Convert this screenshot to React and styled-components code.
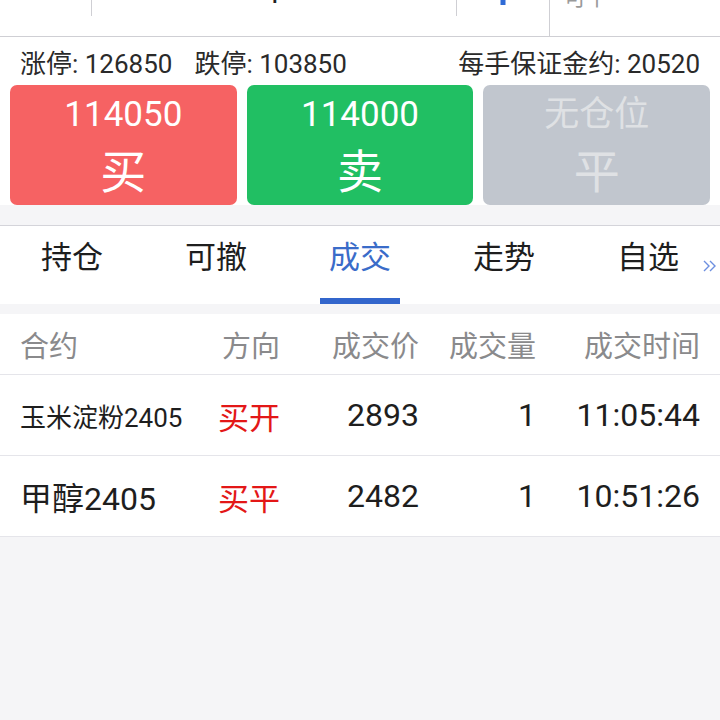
import React from "react";
import styled, { createGlobalStyle } from "styled-components";

const GlobalStyle = createGlobalStyle`
  body {
    margin: 0;
    background: #f5f5f7;
    font-family: Roboto, "Noto Sans CJK SC", sans-serif;
  }
`;

const buttons = [
  { price: "114050", label: "买", tone: "buy" },
  { price: "114000", label: "卖", tone: "sell" },
  { price: "无仓位", label: "平", tone: "off" },
];

const tabs = ["持仓", "可撤", "成交", "走势", "自选"];

const trades = [
  { name: "玉米淀粉2405", size: 26, side: "买开", price: "2893", qty: "1", time: "11:05:44" },
  { name: "甲醇2405", size: 32, side: "买平", price: "2482", qty: "1", time: "10:51:26" },
];

const App = () => {
  return (
    <>
      <GlobalStyle />
      <Page>
        <Top>
          <StepperClip>
            <Stepper>
              <StepCell $w="92px">
                <svg width="28" height="28" viewBox="0 0 28 28">
                  <path d="M3 14h22" stroke="#2f6bd6" strokeWidth="4" />
                </svg>
              </StepCell>
              <StepInput>1</StepInput>
              <StepCell $w="92px" $last>
                <svg width="30" height="30" viewBox="0 0 30 30">
                  <path d="M2 15h26M15 2v28" stroke="#2f6bd6" strokeWidth="5" />
                </svg>
              </StepCell>
            </Stepper>
            <Avail>
              <span>可开</span>
              <span>可平</span>
            </Avail>
          </StepperClip>

          <InfoRow>
            <InfoGroup>
              <span>涨停: 126850</span>
              <span>跌停: 103850</span>
            </InfoGroup>
            <span>每手保证金约: 20520</span>
          </InfoRow>

          <ButtonRow>
            {buttons.map((b) => (
              <TradeButton key={b.label} $tone={b.tone}>
                <Price>{b.price}</Price>
                <Label>{b.label}</Label>
              </TradeButton>
            ))}
          </ButtonRow>
        </Top>

        <TabBar>
          {tabs.map((t) => (
            <Tab key={t} $active={t === "成交"}>
              <span>{t}</span>
              <Underline $active={t === "成交"} />
            </Tab>
          ))}
          <More>
            <svg width="14" height="12" viewBox="0 0 14 12">
              <path d="M1 1l5 5-5 5M7 1l5 5-5 5" fill="none" stroke="#6d8fe0" strokeWidth="1.4" />
            </svg>
          </More>
        </TabBar>

        <Table>
          <HeadRow>
            <HeadCell>合约</HeadCell>
            <HeadCell $right>方向</HeadCell>
            <HeadCell $right>成交价</HeadCell>
            <HeadCell $right>成交量</HeadCell>
            <HeadCell $right>成交时间</HeadCell>
          </HeadRow>
          {trades.map((r) => (
            <BodyRow key={r.name}>
              <Name $size={r.size}>{r.name}</Name>
              <Side>{r.side}</Side>
              <Num>{r.price}</Num>
              <Num>{r.qty}</Num>
              <Num>{r.time}</Num>
            </BodyRow>
          ))}
        </Table>
      </Page>
    </>
  );
};

const Page = styled.div`
  width: 720px;
  min-height: 720px;
  background: #f5f5f7;
  overflow: hidden;
`;

const Top = styled.section`
  background: #fff;
`;

const StepperClip = styled.div`
  height: 36px;
  overflow: hidden;
  display: flex;
  align-items: flex-end;
  border-bottom: 1px solid #cfcfd4;
`;

const Stepper = styled.div`
  width: 549px;
  height: 72px;
  flex-shrink: 0;
  display: flex;
  align-items: flex-start;
`;

const StepCell = styled.div`
  width: ${(p) => p.$w};
  height: 52px;
  display: flex;
  align-items: center;
  justify-content: center;
  border-right: ${(p) => (p.$last ? "none" : "1px solid #cfcfd4")};
  box-sizing: border-box;
`;

const StepInput = styled.div`
  flex: 1;
  height: 52px;
  line-height: 58px;
  text-align: center;
  font-size: 30px;
  color: #222;
  border-right: 1px solid #cfcfd4;
`;

const Avail = styled.div`
  flex: 1;
  height: 72px;
  box-sizing: border-box;
  border-left: 1px solid #cfcfd4;
  padding: 0 0 0 14px;
  display: flex;
  flex-direction: column;
  justify-content: flex-end;
  font-size: 22px;
  line-height: 24px;
  color: #9a9a9a;

  span:last-child {
    margin-bottom: 26px;
  }
`;

const InfoRow = styled.div`
  height: 48px;
  padding: 0 20px;
  display: flex;
  align-items: center;
  justify-content: space-between;
  font-size: 26px;
  color: #2a2a2a;
`;

const InfoGroup = styled.div`
  display: flex;
  gap: 22px;
`;

const ButtonRow = styled.div`
  display: flex;
  gap: 10px;
  padding: 0 10px;
`;

const toneColors = {
  buy: { bg: "#f66263", fg: "#fff" },
  sell: { bg: "#21bf63", fg: "#fff" },
  off: { bg: "#c1c6ce", fg: "#dfe1e4" },
};

const TradeButton = styled.div`
  flex: 1;
  height: 120px;
  border-radius: 7px;
  background: ${(p) => toneColors[p.$tone].bg};
  color: ${(p) => toneColors[p.$tone].fg};
  display: flex;
  flex-direction: column;
  align-items: center;
  padding-top: 8px;
  box-sizing: border-box;
`;

const Price = styled.div`
  font-size: 35px;
  line-height: 44px;
`;

const Label = styled.div`
  margin-top: 3px;
  font-size: 46px;
  line-height: 64px;
`;

const TabBar = styled.nav`
  position: relative;
  margin-top: 20px;
  height: 78px;
  display: flex;
  background: #fff;
  border-top: 1px solid #d4d4da;
`;

const Tab = styled.div`
  flex: 1;
  display: flex;
  flex-direction: column;
  align-items: center;
  justify-content: space-between;
  padding-top: 13px;
  font-size: 31px;
  line-height: 38px;
  color: ${(p) => (p.$active ? "#3a6cc9" : "#1e1e1e")};
`;

const Underline = styled.div`
  width: 80px;
  height: 6px;
  background: ${(p) => (p.$active ? "#3366cc" : "transparent")};
`;

const More = styled.div`
  position: absolute;
  right: 3px;
  top: 34px;
  display: flex;
`;

const Table = styled.section`
  margin-top: 10px;
  background: #fff;
`;

const grid = `
  display: grid;
  grid-template-columns: 180px 80px 139px 117px 1fr;
  align-items: center;
  padding: 0 20px;
  border-bottom: 1px solid #e5e5ea;
`;

const HeadRow = styled.div`
  ${grid}
  height: 60px;
`;

const HeadCell = styled.div`
  font-size: 29px;
  color: #8a8a8c;
  text-align: ${(p) => (p.$right ? "right" : "left")};
  white-space: nowrap;
`;

const BodyRow = styled.div`
  ${grid}
  height: 80px;
`;

const Name = styled.div`
  font-size: ${(p) => p.$size}px;
  color: #1e1e1e;
  white-space: nowrap;
`;

const Side = styled.div`
  font-size: 31px;
  color: #e31717;
  text-align: right;
`;

const Num = styled.div`
  font-size: 32px;
  color: #1e1e1e;
  text-align: right;
  white-space: nowrap;
`;

export default App;
